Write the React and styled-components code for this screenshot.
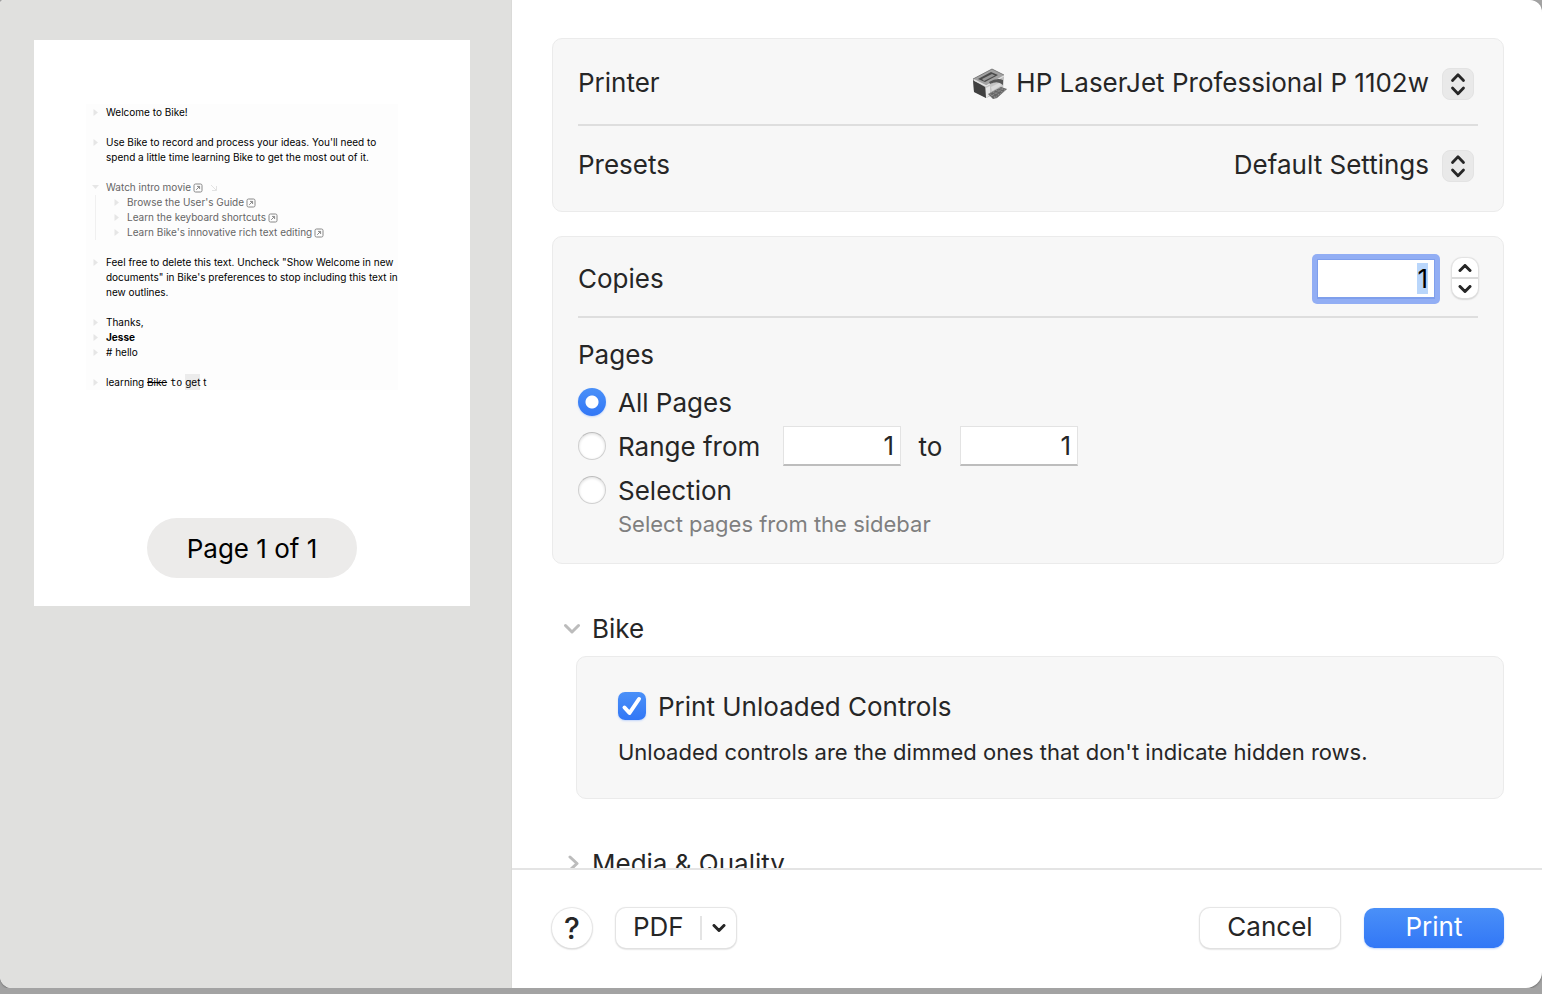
import { useEffect, useRef, useState } from "react";
import styled, { createGlobalStyle, css } from "styled-components";

const GlobalStyle = createGlobalStyle`
  * {
    box-sizing: border-box;
  }
  body {
    margin: 0;
    background: #a3a3a3;
    color: #262626;
    font-family: Inter, "Liberation Sans", sans-serif;
    font-size: 26px;
    line-height: 32px;
  }
  button,
  input,
  select {
    font: inherit;
    color: inherit;
  }
`;

const Sheet = styled.div`
  display: flex;
  height: calc(100vh - 6px);
  min-height: 600px;
  overflow: hidden;
  border-radius: 4px 12px 16px 12px;
  background: white;
  box-shadow: 0 1px 2px #6f6f6f;
`;

const Sidebar = styled.aside`
  flex: 0 0 512px;
  min-width: 0;
  padding: 40px 41px 40px 34px;
  background: #e0e0de;
  border-right: 1px solid #dadad8;
`;

const Page = styled.div`
  display: flex;
  flex-direction: column;
  aspect-ratio: 436 / 566;
  padding: 64px 0 28px;
  background: white;
`;

const Outline = styled.div`
  margin: 0 72px 0 52px;
  padding-top: 1px;
  background: #fdfdfd;
  color: black;
  font-size: 10px;
  line-height: 15px;
`;

const Row = styled.div`
  display: flex;
  margin-bottom: ${(props) => (props.$space ? "15px" : "0")};
  color: ${(props) => (props.$dim ? "#666" : "black")};
  font-weight: ${(props) => (props.$bold ? 700 : 400)};
`;

const Handle = styled.svg`
  flex: none;
  width: 20px;
  height: 15px;
  fill: #e6e6e6;
`;

const RowText = styled.div`
  flex: 1;
  min-width: 0;
  white-space: nowrap;
`;

const Children = styled.div`
  margin: 0 0 15px 9px;
  padding-left: 11px;
  border-left: 1px solid #f0f0f0;
`;

const LinkIcon = styled.svg`
  width: 10px;
  height: 10px;
  margin-left: 2px;
  vertical-align: -2px;
  fill: none;
  stroke: #888;
`;

const ArrowIcon = styled(LinkIcon)`
  margin-left: 6px;
  stroke: #e2e2e2;
`;

const Mono = styled.code`
  margin: 0 3px;
  font-family: "DejaVu Sans Mono", monospace;
  font-size: 10px;
`;

const Mark = styled.mark`
  padding: 2px 0;
  background: #ececec;
  color: inherit;
`;

const PageBadge = styled.div`
  align-self: center;
  width: 210px;
  margin-top: auto;
  padding: 15px 0 13px;
  border-radius: 30px;
  background: #ecebea;
  color: black;
  text-align: center;
`;

const Main = styled.main`
  display: flex;
  flex: 1;
  flex-direction: column;
  min-width: 0;
`;

const Options = styled.div`
  flex: 1;
  min-height: 0;
  overflow: hidden;
  padding: 38px 38px 0 40px;
`;

const Group = styled.section`
  margin-bottom: 24px;
  padding: 5px 25px;
  border: 1px solid #ebebeb;
  border-radius: 10px;
  background: #f7f7f7;
`;

const Field = styled.div`
  display: flex;
  align-items: center;
  justify-content: space-between;
  height: ${(props) => (props.$compact ? "74px" : "80px")};

  & + & {
    border-top: 2px solid #dedede;
    height: 82px;
  }
`;

const FieldLabel = styled.label`
  padding-bottom: 2px;
`;

const Control = styled.div`
  display: flex;
  align-items: center;
  padding-right: ${(props) => (props.$inset ? "4px" : "0")};
`;

const Select = styled.select`
  appearance: none;
  margin: 0;
  padding: 0 0 2px;
  border: none;
  outline: none;
  background: none;
  text-align-last: right;
`;

const PrinterPicture = styled.svg`
  width: 36px;
  height: 32px;
  margin-right: 8px;
`;

const SelectArrows = styled.svg`
  width: 32px;
  height: 32px;
  margin-left: 13px;
  border: 1px solid #e3e3e3;
  border-radius: 8px;
  background: #e9e9e9;
  pointer-events: none;
`;

const NumberInput = styled.input`
  width: 118px;
  height: 40px;
  padding: 0 6px;
  border: 1px solid #e3e3e3;
  border-bottom: 2px solid #bdbdbd;
  border-radius: 0;
  outline: none;
  background: white;
  text-align: right;

  ${(props) =>
    props.$ring &&
    css`
      margin: 5px;
      border: 1px solid #7f9fec;
      border-bottom-width: 2px;
      box-shadow: 0 0 0 5px #92aef4;
      clip-path: inset(-5px round 5px);
      color: black;
    `}

  &::selection {
    background: #b9d6fb;
    color: black;
  }
`;

const Stepper = styled.div`
  display: flex;
  flex-direction: column;
  width: 26px;
  height: 40px;
  margin: 0 0 2px 12px;
  border-radius: 10px;
  background: white;
  box-shadow: 0 0 1px 1px #e2e2e2, 0 1px 2px #999;
`;

const StepButton = styled.button`
  display: flex;
  flex: 1;
  align-items: center;
  justify-content: center;
  padding: 0;
  border: none;
  background: none;

  & + & {
    border-top: 2px solid #dcdcdc;
  }
`;

const Chevron = styled.svg`
  width: 14px;
  height: 8px;
  fill: none;
  stroke: #262626;
  stroke-width: 3;
  stroke-linecap: round;
  stroke-linejoin: round;
`;

const Pages = styled.fieldset`
  margin: 0;
  padding: 0 0 22px;
  border: none;
  border-top: 2px solid #dedede;
`;

const PagesTitle = styled.div`
  padding: 21px 0 9px;
`;

const RadioRow = styled.div`
  display: flex;
  align-items: center;
  height: 44px;
`;

const RadioLabel = styled.label`
  display: flex;
  align-items: center;
  gap: 12px;
`;

const LabelText = styled.span`
  padding-top: 2px;
`;

const RangeLabel = styled(RadioLabel)`
  width: 205px;
`;

const Joiner = styled.label`
  width: 59px;
  padding-top: 2px;
  text-align: center;
`;

const Radio = styled.input`
  appearance: none;
  flex: none;
  width: 28px;
  height: 28px;
  margin: 0;
  border: 1px solid #d0d0d0;
  border-top-color: #bdbdbd;
  border-radius: 50%;
  background: white;
  box-shadow: inset 0 1px 3px #dedede;

  &:checked {
    border: none;
    background: radial-gradient(circle, white 6px, transparent 7px),
      linear-gradient(#4a90f8, #3277f6);
    box-shadow: 0 1px 2px #c2d6fb;
  }
`;

const Hint = styled.div`
  padding-left: 40px;
  color: #7f7f7f;
  font-size: 22px;
  line-height: 24px;
`;

const Disclosure = styled.button`
  display: flex;
  align-items: center;
  gap: 12px;
  height: 54px;
  margin-top: 38px;
  padding: 0 12px;
  border: none;
  background: none;
`;

const DisclosureIcon = styled.svg`
  width: 16px;
  height: 18px;
  fill: none;
  stroke: #bcbcbc;
  stroke-width: 3;
  stroke-linecap: round;
  stroke-linejoin: round;
`;

const AppGroup = styled(Group)`
  margin: 0 0 0 24px;
  padding: 32px 41px 30px;
`;

const CheckLabel = styled.label`
  display: flex;
  align-items: center;
  gap: 12px;
`;

const CheckBox = styled.input`
  appearance: none;
  width: 28px;
  height: 28px;
  margin: 0;
  border: 1px solid #cfcfcf;
  border-radius: 7px;
  background: white;

  &:checked {
    border: none;
    background: linear-gradient(#4a90f8, #3277f6);
    box-shadow: 0 1px 2px #c2d6fb;
  }
`;

const CheckHolder = styled.span`
  display: grid;

  & > * {
    grid-area: 1 / 1;
  }
`;

const Tick = styled.svg`
  width: 28px;
  height: 28px;
  fill: none;
  stroke: white;
  stroke-width: 4;
  stroke-linecap: round;
  stroke-linejoin: round;
  pointer-events: none;
`;

const Note = styled.p`
  margin: 13px 0 0;
  font-size: 22px;
  line-height: 32px;
`;

const Footer = styled.footer`
  display: flex;
  align-items: center;
  height: 120px;
  padding: 0 38px 2px 40px;
  border-top: 2px solid #e4e4e4;
`;

const Button = styled.button`
  width: 140px;
  height: 40px;
  padding: 0 0 2px;
  border: none;
  border-radius: 10px;
  background: ${(props) =>
    props.$primary ? "linear-gradient(#4a90f8, #3277f6)" : "white"};
  color: ${(props) => (props.$primary ? "white" : "#262626")};
  box-shadow: ${(props) =>
    props.$primary
      ? "0 1px 2px #c2d6fb"
      : "0 0 1px 1px #e4e4e4, 0 1px 2px #b4b4b4"};
`;

const HelpButton = styled(Button)`
  width: 40px;
  padding: 0;
  border-radius: 50%;
  font-size: 30px;
  font-weight: 500;
`;

const PdfButton = styled(Button)`
  display: flex;
  align-items: center;
  width: 120px;
  margin: 0 auto 0 24px;
  padding: 0 10px 0 17px;
`;

const PdfText = styled.span`
  flex: 1;
  padding-bottom: 2px;
  text-align: left;
`;

const PdfArrow = styled.span`
  display: flex;
  align-items: center;
  height: 24px;
  padding-left: 10px;
  border-left: 2px solid #e4e4e4;
`;

const Actions = styled.div`
  display: flex;
  gap: 24px;
`;

const Triangle = ({ open }) => (
  <Handle viewBox="0 0 20 15" aria-hidden="true">
    <path d={open ? "M6 5h7l-3.5 4z" : "M7.5 4v7l4.5-3.5z"} />
  </Handle>
);

const Line = ({ children, open, ...rest }) => (
  <Row {...rest}>
    <Triangle open={open} />
    <RowText>{children}</RowText>
  </Row>
);

const ExternalLink = () => (
  <LinkIcon viewBox="0 0 10 10" aria-hidden="true">
    <rect x="1" y="1" width="8" height="8" rx="1.5" />
    <path d="M3.2 6.8l3.3-3.3M4 3.4h2.6V6" />
  </LinkIcon>
);

const UpDown = () => (
  <SelectArrows viewBox="0 0 30 30" aria-hidden="true">
    <path
      d="M9.5 11.5L15 5.8l5.5 5.7M9.5 19l5.5 5.7 5.5-5.7"
      fill="none"
      stroke="#262626"
      strokeWidth="2.8"
      strokeLinecap="round"
      strokeLinejoin="round"
    />
  </SelectArrows>
);

const Printer = () => (
  <PrinterPicture viewBox="0 0 36 32" aria-hidden="true">
    <path d="M1 11L20 1l12 6-1 15-17 8L2 24z" fill="#b4b4b4" />
    <path d="M1 12l12 7 1 11-12-6z" fill="#404040" />
    <path d="M1 11L20 1l12 6-18 11z" fill="#a2a2a2" />
    <path d="M1 11L20 1l12 6" fill="none" stroke="#707070" strokeWidth="0.8" />
    <path d="M6 11l13-7 7 3-13 7z" fill="#4b4b4b" />
    <path d="M10 11l10-5 3 1.5-11 5.5z" fill="#969696" />
    <path d="M2 12l12 6L32 8" fill="none" stroke="#e0e0e0" strokeWidth="1.4" />
    <path d="M14 19l17-9v11l-17 9z" fill="#c4c4c4" />
    <path d="M17 14q8-5 14-2v5q-5-5-13-1z" fill="#575757" />
    <path d="M14 20l4-2v9l-4 3z" fill="#e6e6e6" />
    <path d="M19 19l8-4 3 2-10 6z" fill="#dadada" />
    <path d="M16 26l13-7 6 2-10 9-4 1z" fill="#666" />
    <path
      d="M18 26l7 4M21 24l7 3M24 22l7 2M27 20l6 2M19 28l13-8M17 26l11-6M22 30l13-9"
      stroke="#a0a0a0"
      strokeWidth="0.7"
      strokeDasharray="1.5 1"
    />
  </PrinterPicture>
);

const App = () => {
  const [copies, setCopies] = useState(1);
  const [range, setRange] = useState("all");
  const [from, setFrom] = useState("1");
  const [to, setTo] = useState("1");
  const [unloaded, setUnloaded] = useState(true);
  const [bikeOpen, setBikeOpen] = useState(true);
  const copiesRef = useRef(null);

  useEffect(() => {
    copiesRef.current.focus();
    copiesRef.current.select();
  }, []);

  return (
    <>
      <GlobalStyle />
      <Sheet>
        <Sidebar>
          <Page>
            <Outline>
              <Line $space>Welcome to Bike!</Line>
              <Line $space>
                Use Bike to record and process your ideas. You'll need to
                <br />
                spend a little time learning Bike to get the most out of it.
              </Line>
              <Line $dim open>
                Watch intro movie
                <ExternalLink />
                <ArrowIcon viewBox="0 0 10 10" aria-hidden="true">
                  <path d="M2 2l5.5 5.5M7.5 3v4.5H3" />
                </ArrowIcon>
              </Line>
              <Children>
                <Line $dim>
                  Browse the User's Guide
                  <ExternalLink />
                </Line>
                <Line $dim>
                  Learn the keyboard shortcuts
                  <ExternalLink />
                </Line>
                <Line $dim>
                  Learn Bike's innovative rich text editing
                  <ExternalLink />
                </Line>
              </Children>
              <Line $space>
                Feel free to delete this text. Uncheck "Show Welcome in new
                <br />
                documents" in Bike's preferences to stop including this text in
                <br />
                new outlines.
              </Line>
              <Line>Thanks,</Line>
              <Line $bold>Jesse</Line>
              <Line $space># hello</Line>
              <Line>
                learning <s>Bike</s>
                <Mono>to</Mono>
                <Mark>get</Mark> t
              </Line>
            </Outline>
            <PageBadge>Page 1 of 1</PageBadge>
          </Page>
        </Sidebar>

        <Main>
          <Options>
            <Group>
              <Field>
                <FieldLabel htmlFor="printer">Printer</FieldLabel>
                <Control $inset>
                  <Printer />
                  <Select id="printer">
                    <option>HP LaserJet Professional P 1102w</option>
                  </Select>
                  <UpDown />
                </Control>
              </Field>
              <Field>
                <FieldLabel htmlFor="presets">Presets</FieldLabel>
                <Control $inset>
                  <Select id="presets">
                    <option>Default Settings</option>
                  </Select>
                  <UpDown />
                </Control>
              </Field>
            </Group>

            <Group>
              <Field $compact>
                <label htmlFor="copies">Copies</label>
                <Control>
                  <NumberInput
                    $ring
                    id="copies"
                    type="text"
                    ref={copiesRef}
                    value={copies}
                    onChange={(e) => setCopies(Number(e.target.value) || 1)}
                  />
                  <Stepper>
                    <StepButton
                      type="button"
                      aria-label="More copies"
                      onClick={() => setCopies(copies + 1)}
                    >
                      <Chevron viewBox="0 0 14 8">
                        <path d="M2 6.5l5-5 5 5" />
                      </Chevron>
                    </StepButton>
                    <StepButton
                      type="button"
                      aria-label="Fewer copies"
                      onClick={() => setCopies(Math.max(1, copies - 1))}
                    >
                      <Chevron viewBox="0 0 14 8">
                        <path d="M2 1.5l5 5 5-5" />
                      </Chevron>
                    </StepButton>
                  </Stepper>
                </Control>
              </Field>
              <Pages aria-labelledby="pages-title">
                <PagesTitle id="pages-title">Pages</PagesTitle>
                <RadioRow>
                  <RadioLabel>
                    <Radio
                      type="radio"
                      name="pages"
                      checked={range === "all"}
                      onChange={() => setRange("all")}
                    />
                    <LabelText>All Pages</LabelText>
                  </RadioLabel>
                </RadioRow>
                <RadioRow>
                  <RangeLabel>
                    <Radio
                      type="radio"
                      name="pages"
                      checked={range === "range"}
                      onChange={() => setRange("range")}
                    />
                    <LabelText>Range from</LabelText>
                  </RangeLabel>
                  <NumberInput
                    type="text"
                    aria-label="From page"
                    value={from}
                    onChange={(e) => setFrom(e.target.value)}
                  />
                  <Joiner htmlFor="to-page">to</Joiner>
                  <NumberInput
                    id="to-page"
                    type="text"
                    value={to}
                    onChange={(e) => setTo(e.target.value)}
                  />
                </RadioRow>
                <RadioRow>
                  <RadioLabel>
                    <Radio
                      type="radio"
                      name="pages"
                      checked={range === "selection"}
                      onChange={() => setRange("selection")}
                    />
                    <LabelText>Selection</LabelText>
                  </RadioLabel>
                </RadioRow>
                <Hint>Select pages from the sidebar</Hint>
              </Pages>
            </Group>

            <Disclosure
              type="button"
              aria-expanded={bikeOpen}
              onClick={() => setBikeOpen(!bikeOpen)}
            >
              <DisclosureIcon viewBox="0 0 16 18">
                <path d={bikeOpen ? "M1.5 5.5L8 12l6.5-6.5" : "M6 2l7 6.5L6 15"} />
              </DisclosureIcon>
              Bike
            </Disclosure>
            {bikeOpen && (
              <AppGroup>
                <CheckLabel>
                  <CheckHolder>
                    <CheckBox
                      type="checkbox"
                      checked={unloaded}
                      onChange={(e) => setUnloaded(e.target.checked)}
                    />
                    <Tick viewBox="0 0 28 28">
                      <path d="M6.5 15.5l5 5.5L21 7" />
                    </Tick>
                  </CheckHolder>
                  <LabelText>Print Unloaded Controls</LabelText>
                </CheckLabel>
                <Note>
                  Unloaded controls are the dimmed ones that don't indicate
                  hidden rows.
                </Note>
              </AppGroup>
            )}
            <Disclosure type="button" aria-expanded="false">
              <DisclosureIcon viewBox="0 0 16 18">
                <path d="M6 2l7 6.5L6 15" />
              </DisclosureIcon>
              Media &amp; Quality
            </Disclosure>
          </Options>

          <Footer>
            <HelpButton type="button" aria-label="Help">
              ?
            </HelpButton>
            <PdfButton type="button">
              <PdfText>PDF</PdfText>
              <PdfArrow>
                <Chevron viewBox="0 0 14 8">
                  <path d="M2 1.5l5 5 5-5" />
                </Chevron>
              </PdfArrow>
            </PdfButton>
            <Actions>
              <Button type="button">Cancel</Button>
              <Button type="submit" $primary>
                Print
              </Button>
            </Actions>
          </Footer>
        </Main>
      </Sheet>
    </>
  );
};

export default App;
